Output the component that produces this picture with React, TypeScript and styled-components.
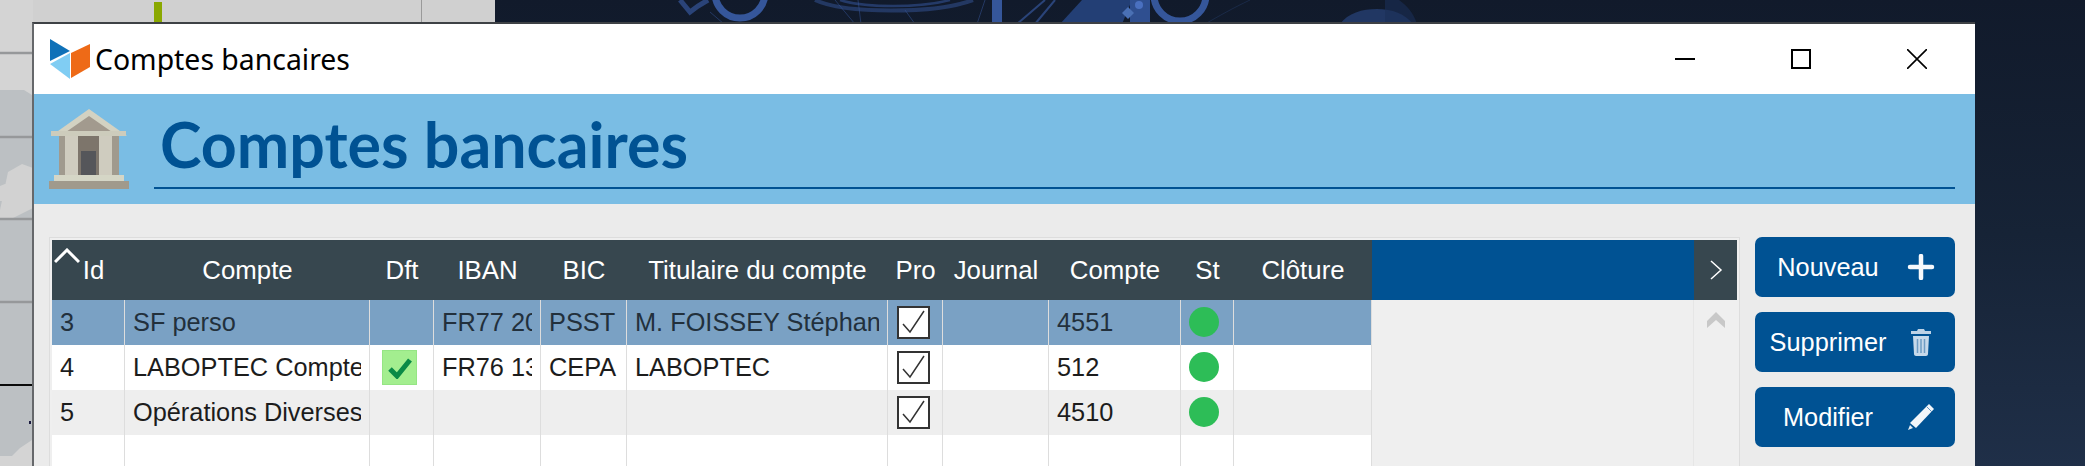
import React from 'react';
import styled, { createGlobalStyle } from 'styled-components';

type Account = {
  id: string;
  name: string;
  isDefault?: boolean;
  iban?: string;
  bic?: string;
  holder?: string;
  pro?: boolean;
  ledger?: string;
  active?: boolean;
};

const COLUMNS = [
  { label: 'Id', width: 73 },
  { label: 'Compte', width: 245 },
  { label: 'Dft', width: 64 },
  { label: 'IBAN', width: 107 },
  { label: 'BIC', width: 86 },
  { label: 'Titulaire du compte', width: 261 },
  { label: 'Pro', width: 55 },
  { label: 'Journal', width: 106 },
  { label: 'Compte', width: 132 },
  { label: 'St', width: 53 },
  { label: 'Clôture', width: 138 },
];

const ACCOUNTS: Account[] = [
  {
    id: '3',
    name: 'SF perso',
    iban: 'FR77 2004 1010',
    bic: 'PSST',
    holder: 'M. FOISSEY Stéphane',
    pro: true,
    ledger: '4551',
    active: true,
  },
  {
    id: '4',
    name: 'LABOPTEC Compte courant',
    isDefault: true,
    iban: 'FR76 1360 5000',
    bic: 'CEPA',
    holder: 'LABOPTEC',
    pro: true,
    ledger: '512',
    active: true,
  },
  {
    id: '5',
    name: 'Opérations Diverses',
    pro: true,
    ledger: '4510',
    active: true,
  },
  { id: '', name: '' },
];

const GlobalStyle = createGlobalStyle`
  html, body {
    margin: 0;
    padding: 0;
    overflow: hidden;
    background: #111a2b;
  }
`;

const Desktop = styled.div`
  position: relative;
  width: 2085px;
  height: 466px;
  overflow: hidden;
  box-sizing: border-box;
  padding: 22px 110px 0 32px;
  background: linear-gradient(180deg, #111a2b 0%, #162336 50%, #1f2f48 100%);
`;

const Wallpaper = styled.svg`
  position: absolute;
  top: 0;
  left: 0;
`;

const Window = styled.div`
  position: relative;
  height: 100%;
  box-sizing: border-box;
  border-top: 2px solid #3e4145;
  border-left: 2px solid #66686b;
  display: flex;
  flex-direction: column;
  background: #ebebeb;
`;

const TitleBar = styled.div`
  height: 70px;
  flex-shrink: 0;
  display: flex;
  align-items: center;
  background: #fff;
  padding-left: 16px;
`;

const Logo = styled.svg`
  flex-shrink: 0;
`;

const WindowTitle = styled.div`
  flex: 1;
  margin-left: 5px;
  font-family: 'Noto Sans', sans-serif;
  font-size: 28.4px;
  color: #000;
`;

const WindowButton = styled.div`
  width: 116px;
  display: flex;
  justify-content: center;
  align-items: center;
`;

const Banner = styled.div`
  height: 110px;
  flex-shrink: 0;
  box-sizing: border-box;
  display: flex;
  padding: 15px 20px 0 15px;
  background: #7abde4;
`;

const BankIcon = styled.svg`
  flex-shrink: 0;
`;

const BannerTitle = styled.h1`
  flex: 1;
  height: 78px;
  margin: 0 0 0 25px;
  padding-left: 6px;
  border-bottom: 2px solid #005293;
  font-family: Lato, sans-serif;
  font-size: 62.7px;
  font-weight: 700;
  line-height: 70px;
  color: #005293;
`;

const Content = styled.div`
  flex: 1;
  min-height: 0;
  display: flex;
  gap: 15px;
  padding: 33px 20px 0 15px;
`;

const GridFrame = styled.div`
  flex: 1;
  box-sizing: border-box;
  border: 1px solid #dddddd;
  border-bottom: none;
  padding: 2px 2px 0;
  background: #efefef;
  display: flex;
  flex-direction: column;
`;

const Row = styled.div`
  display: flex;
`;

const HeaderRow = styled(Row)`
  height: 60px;
  flex-shrink: 0;
  background: #005293;
`;

const HeaderCell = styled.div<{ $width: number; $sorted?: boolean }>`
  position: relative;
  box-sizing: border-box;
  width: ${(p) => p.$width}px;
  padding-left: ${(p) => (p.$sorted ? '10px' : '0')};
  display: flex;
  align-items: center;
  justify-content: center;
  background: #37474f;
  color: #fff;
  font-family: 'Liberation Sans', Arial, sans-serif;
  font-size: 25.8px;
`;

const SortCaret = styled.svg`
  position: absolute;
  top: 8px;
  left: 2px;
`;

const HeaderGap = styled.div`
  flex: 1;
`;

const NextColumns = styled.div`
  width: 43px;
  display: flex;
  align-items: center;
  justify-content: center;
  background: #37474f;
`;

const GridBody = styled.div`
  flex: 1;
  min-height: 0;
  display: flex;
`;

const Rows = styled.div`
  display: flex;
  flex-direction: column;
`;

const rowColor = (index: number) => {
  if (index === 0) return '#7aa1c4';
  return index === 2 ? '#eeeeee' : '#ffffff';
};

const DataRow = styled(Row)<{ $index: number }>`
  height: 45px;
  flex-shrink: 0;
  background: ${(p) => rowColor(p.$index)};
  color: ${(p) => (p.$index === 0 ? '#22303c' : '#1c1c1c')};
`;

const Cell = styled.div<{ $width: number }>`
  box-sizing: border-box;
  width: ${(p) => p.$width}px;
  padding: 0 8px;
  border-right: 1px solid #dddddd;
  display: flex;
  align-items: center;
  font-family: 'Liberation Sans', Arial, sans-serif;
  font-size: 25.33px;
`;

const CellText = styled.span`
  display: block;
  flex: 1;
  min-width: 0;
  overflow: hidden;
  white-space: nowrap;
`;

const DefaultMark = styled.div`
  width: 35px;
  height: 35px;
  margin-left: 4px;
  display: flex;
  align-items: center;
  justify-content: center;
  background: #a3ee8f;
  border: 1px solid #95e584;
  box-sizing: border-box;
`;

const CheckBox = styled.div`
  width: 33px;
  height: 33px;
  margin: 0 0 0 1px;
  box-sizing: border-box;
  border: 2px solid #333;
  background: #fff;
  display: flex;
  align-items: center;
  justify-content: center;
`;

const StatusDot = styled.div`
  width: 30px;
  height: 30px;
  margin-top: -1px;
  border-radius: 50%;
  background: #2dbd57;
`;

const BodyGap = styled.div`
  flex: 1;
`;

const ScrollColumn = styled.div`
  width: 43px;
  padding-top: 12px;
  border-left: 1px solid #e6e6e6;
  display: flex;
  justify-content: center;
  align-items: flex-start;
`;

const Actions = styled.div`
  width: 200px;
  flex-shrink: 0;
  display: flex;
  flex-direction: column;
  gap: 15px;
`;

const ActionButton = styled.button`
  width: 200px;
  height: 60px;
  padding: 0;
  border: none;
  border-radius: 7px;
  display: flex;
  align-items: center;
  background: #005293;
  color: #fff;
  font-family: 'Liberation Sans', Arial, sans-serif;
  font-size: 25.33px;
`;

const ActionLabel = styled.span`
  width: 146px;
  text-align: center;
`;

const ActionIcon = styled.svg`
  margin-left: 6px;
`;

const WallpaperArt = () => (
  <Wallpaper width="2085" height="466" viewBox="0 0 2085 466">
    {/* fenêtre derrière, à gauche */}
    <rect x="0" y="0" width="495" height="24" fill="#d0d0d0" />
    <rect x="0" y="0" width="33" height="466" fill="#d4d4d4" />
    <path d="M0 90h24l8 5v345l-12 8-8 8H0z" fill="#bcc0c3" />
    <path d="M0 186l10-4 2 2-2 14-8 3H0zM8 172l14-8 11 4v40l-20 10H0v-8z" fill="#d2d2d2" />
    <path d="M0 53h33M0 137h33M0 219h33M0 302h33" stroke="#96989a" strokeWidth="2.500" />
    <path d="M0 385h33" stroke="#0a0a0a" strokeWidth="2" />
    <rect x="29" y="421" width="2" height="3" fill="#1a1a40" />
    <path d="M421.500 0v24" stroke="#9a9a9a" />
    <rect x="154" y="2" width="8" height="22" fill="#8aa800" />
    {/* fond d'écran */}
    <g fill="none" stroke="#35569a">
      <circle cx="740" cy="-7" r="25" strokeWidth="7" />
      <path d="M680 0l10 12 8-6 10-6" strokeWidth="5" opacity="0.7" />
      <path d="M710 12l14 12" strokeWidth="1" opacity="0.5" />
      <path d="M815 0c30 14 120 14 158 0" strokeWidth="4" opacity="0.5" />
      <path d="M840 0c25 8 80 8 110 0" strokeWidth="2.500" opacity="0.55" />
      <path d="M835 0l20 24M858 0l3 24M905 10l10 14M985 0l-8 24" strokeWidth="1" opacity="0.5" />
      <path d="M997 0v24" strokeWidth="10" />
      <path d="M1045 0l-28 24M1055 0l-20 24" strokeWidth="2" opacity="0.7" />
      <circle cx="1180" cy="-5" r="26" strokeWidth="7" />
      <path d="M1205 24c14-8 28-16 45-24" strokeWidth="1" opacity="0.25" />
    </g>
    <path d="M1060 24l22-24h50l-10 24z" fill="#233f75" />
    <rect x="1130" y="0" width="20" height="24" fill="#2f4f90" />
    <circle cx="1139" cy="5" r="4" fill="#4a70c0" />
    <path d="M1128 7l6 6-6 6-6-6z" fill="#4a70b4" />
    <path d="M1340 24c8-11 22-15 37-15s28 5 36 15z" fill="#213763" />
    <path d="M1385 0h14c8 6 14 12 18 24h-32z" fill="#1b2f57" opacity="0.6" />
  </Wallpaper>
);

const BrandLogo = () => (
  <Logo width="40" height="40" viewBox="0 0 40 40">
    <path d="M0 0l20 12L0 22z" fill="#0f71b8" />
    <path d="M0 25l20-11v26z" fill="#80cdf3" />
    <path d="M21 14l19-9v23l-19 11z" fill="#ee6a17" />
  </Logo>
);

const Minimize = () => (
  <svg width="20" height="20" viewBox="0 0 20 20">
    <path d="M0 10h20" stroke="#000" strokeWidth="2" />
  </svg>
);

const Maximize = () => (
  <svg width="20" height="20" viewBox="0 0 20 20">
    <rect x="1" y="1" width="18" height="18" fill="none" stroke="#000" strokeWidth="2" />
  </svg>
);

const Close = () => (
  <svg width="20" height="20" viewBox="0 0 20 20">
    <path d="M0 0l20 20M20 0L0 20" stroke="#000" strokeWidth="1.600" />
  </svg>
);

const Bank = () => (
  <BankIcon width="80" height="80" viewBox="0 0 80 80">
    <rect x="10" y="27" width="60" height="40" fill="#a09a8e" />
    <rect x="27" y="27" width="23" height="40" fill="#7d756b" />
    <rect x="16" y="27" width="13" height="40" fill="#cfccbf" />
    <rect x="50" y="27" width="13" height="40" fill="#cfccbf" />
    <rect x="32" y="42" width="15" height="24" fill="#55565a" />
    <path d="M2 27L40 0l38 27z" fill="#d3d2c2" />
    <path d="M17 23L40 7l23 16z" fill="#a29a8e" />
    <rect x="2" y="22" width="75" height="5" fill="#cdccbc" />
    <rect x="5" y="66" width="70" height="7" fill="#d5d6c6" />
    <rect x="0" y="72" width="80" height="8" fill="#a09a8c" />
  </BankIcon>
);

const Tick = () => (
  <svg width="24" height="22" viewBox="0 0 24 22">
    <path d="M2 12l7 7L22 3" fill="none" stroke="#0a8a46" strokeWidth="5" />
  </svg>
);

const ThinTick = () => (
  <svg width="25" height="25" viewBox="0 0 25 25">
    <path d="M2 14l7 8L23 1" fill="none" stroke="#333" strokeWidth="1.500" />
  </svg>
);

const Plus = () => (
  <ActionIcon width="28" height="26" viewBox="0 0 28 26">
    <path d="M14 2v22M3 13h22" stroke="#f6f9fc" strokeWidth="4.500" strokeLinecap="round" />
  </ActionIcon>
);

const Trash = () => (
  <ActionIcon width="28" height="28" viewBox="0 0 28 28">
    <path d="M11 1h6l1 2h6v3H4V3h6z" fill="#bcd2e6" />
    <path d="M6 8h16l-1 18c0 1-1 2-2 2H9c-1 0-2-1-2-2z" fill="#c6d9ea" />
    <path d="M10.500 11v14M14 11v14M17.500 11v14" stroke="#6f9dc4" strokeWidth="1.500" />
  </ActionIcon>
);

const Pencil = () => (
  <ActionIcon width="28" height="28" viewBox="0 0 28 28">
    <path d="M22 1l5 5L9 25l-6-5z" fill="#f2f6fa" />
    <path d="M3 22l3 3-5 2z" fill="#e4edf4" />
    <path d="M20 4l5 5" stroke="#5f93bd" strokeWidth="1" />
  </ActionIcon>
);

const App = () => (
  <>
    <GlobalStyle />
    <Desktop>
      <WallpaperArt />
      <Window>
        <TitleBar>
          <BrandLogo />
          <WindowTitle>Comptes bancaires</WindowTitle>
          <WindowButton>
            <Minimize />
          </WindowButton>
          <WindowButton>
            <Maximize />
          </WindowButton>
          <WindowButton>
            <Close />
          </WindowButton>
        </TitleBar>
        <Banner>
          <Bank />
          <BannerTitle>Comptes bancaires</BannerTitle>
        </Banner>
        <Content>
          <GridFrame>
            <HeaderRow>
              {COLUMNS.map((col, i) => (
                <HeaderCell key={i} $width={col.width} $sorted={i === 0}>
                  {i === 0 && (
                    <SortCaret width="26" height="16" viewBox="0 0 26 16">
                      <path d="M1 14L13 2l12 12" fill="none" stroke="#fff" strokeWidth="3" />
                    </SortCaret>
                  )}
                  {col.label}
                </HeaderCell>
              ))}
              <HeaderGap />
              <NextColumns>
                <svg width="14" height="20" viewBox="0 0 14 20">
                  <path d="M2 1l10 9-10 9" fill="none" stroke="#fff" strokeWidth="1.500" />
                </svg>
              </NextColumns>
            </HeaderRow>
            <GridBody>
              <Rows>
                {ACCOUNTS.map((account, index) => (
                  <DataRow key={index} $index={index}>
                    <Cell $width={COLUMNS[0].width}>
                      <CellText>{account.id}</CellText>
                    </Cell>
                    <Cell $width={COLUMNS[1].width}>
                      <CellText>{account.name}</CellText>
                    </Cell>
                    <Cell $width={COLUMNS[2].width}>
                      {account.isDefault && (
                        <DefaultMark>
                          <Tick />
                        </DefaultMark>
                      )}
                    </Cell>
                    <Cell $width={COLUMNS[3].width}>
                      <CellText>{account.iban}</CellText>
                    </Cell>
                    <Cell $width={COLUMNS[4].width}>
                      <CellText>{account.bic}</CellText>
                    </Cell>
                    <Cell $width={COLUMNS[5].width}>
                      <CellText>{account.holder}</CellText>
                    </Cell>
                    <Cell $width={COLUMNS[6].width}>
                      {account.pro && (
                        <CheckBox>
                          <ThinTick />
                        </CheckBox>
                      )}
                    </Cell>
                    <Cell $width={COLUMNS[7].width} />
                    <Cell $width={COLUMNS[8].width}>
                      <CellText>{account.ledger}</CellText>
                    </Cell>
                    <Cell $width={COLUMNS[9].width}>
                      {account.active && <StatusDot />}
                    </Cell>
                    <Cell $width={COLUMNS[10].width} />
                  </DataRow>
                ))}
              </Rows>
              <BodyGap />
              <ScrollColumn>
                <svg width="18" height="16" viewBox="0 0 18 16">
                  <path d="M9 0l9 9v7L9 8l-9 8V9z" fill="#c8c8c8" />
                </svg>
              </ScrollColumn>
            </GridBody>
          </GridFrame>
          <Actions>
            <ActionButton>
              <ActionLabel>Nouveau</ActionLabel>
              <Plus />
            </ActionButton>
            <ActionButton>
              <ActionLabel>Supprimer</ActionLabel>
              <Trash />
            </ActionButton>
            <ActionButton>
              <ActionLabel>Modifier</ActionLabel>
              <Pencil />
            </ActionButton>
          </Actions>
        </Content>
      </Window>
    </Desktop>
  </>
);

export default App;
